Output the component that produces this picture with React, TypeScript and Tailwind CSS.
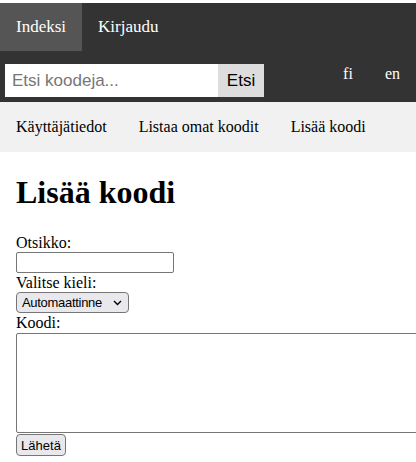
import React from "react";

export default function App() {
  const serif = { fontFamily: '"Liberation Serif", "Times New Roman", serif' };
  return (
    <div className="min-h-[462px] w-[416px] overflow-hidden bg-white pt-[3px]" style={serif}>
      <div className="bg-[#333333] text-white">
        <div className="flex text-[17px] leading-[18px]">
          <a className="bg-[#555555] px-4 py-[15px]">Indeksi</a>
          <a className="px-4 py-[15px]">Kirjaudu</a>
        </div>
        <div className="flex h-[51px] items-start">
          <form className="ml-[5px] mt-[13px] flex h-[33px]" onSubmit={(e) => e.preventDefault()}>
            <input
              placeholder="Etsi koodeja..."
              className="h-[33px] w-[213px] bg-white px-[7px] text-[17px] text-black outline-none placeholder:text-[#767676]"
              style={{ fontFamily: '"Liberation Sans", Arial, sans-serif' }}
            />
            <button
              type="submit"
              className="h-[33px] w-[46px] bg-[#dddddd] text-center text-[17px] text-black"
              style={{ fontFamily: '"Liberation Sans", Arial, sans-serif' }}
            >
              Etsi
            </button>
          </form>
          <div className="ml-auto flex text-[16px] leading-[18px]">
            <a className="px-4 py-[14px]">fi</a>
            <a className="px-4 py-[14px]">en</a>
          </div>
        </div>
      </div>
      <div className="flex bg-[#f1f1f1] text-[16px] leading-[18px] text-black">
        <a className="px-4 py-4">Käyttäjätiedot</a>
        <a className="px-4 py-4">Listaa omat koodit</a>
        <a className="px-4 py-4">Lisää koodi</a>
      </div>
      <div className="px-4 text-black">
        <h1 className="mb-[22px] mt-[22px] text-[32px] font-bold leading-[37px]">Lisää koodi</h1>
        <form className="flex flex-col items-start text-[16px] leading-[19px]" onSubmit={(e) => e.preventDefault()}>
          <label>Otsikko:</label>
          <input className="h-[21px] w-[158px] rounded-[2px] border border-[#767676] bg-white" />
          <label>Valitse kieli:</label>
          <div
            className="flex h-[21px] w-[113px] items-center rounded-[4px] border border-[#767676] bg-[#e9e9ed] pl-[5px] text-[13px] leading-[15px]"
            style={{ fontFamily: '"Liberation Sans", Arial, sans-serif' }}
          >
            <span className="tracking-[-0.3px]">Automaattinne</span>
            <svg className="ml-auto mr-[6px]" width="9" height="6" viewBox="0 0 9 6" fill="none">
              <path d="M1 1l3.5 3.5L8 1" stroke="#000" strokeWidth="1.4" />
            </svg>
          </div>
          <label>Koodi:</label>
          <textarea className="mt-[1px] h-[100px] w-[440px] resize-none rounded-[2px] border border-[#767676] bg-white" />
          <button
            type="submit"
            className="mt-[1px] h-[22px] w-[50px] rounded-[4px] border border-[#767676] bg-[#e9e9ed] text-center text-[13px]"
            style={{ fontFamily: '"Liberation Sans", Arial, sans-serif' }}
          >
            Lähetä
          </button>
        </form>
      </div>
    </div>
  );
}
